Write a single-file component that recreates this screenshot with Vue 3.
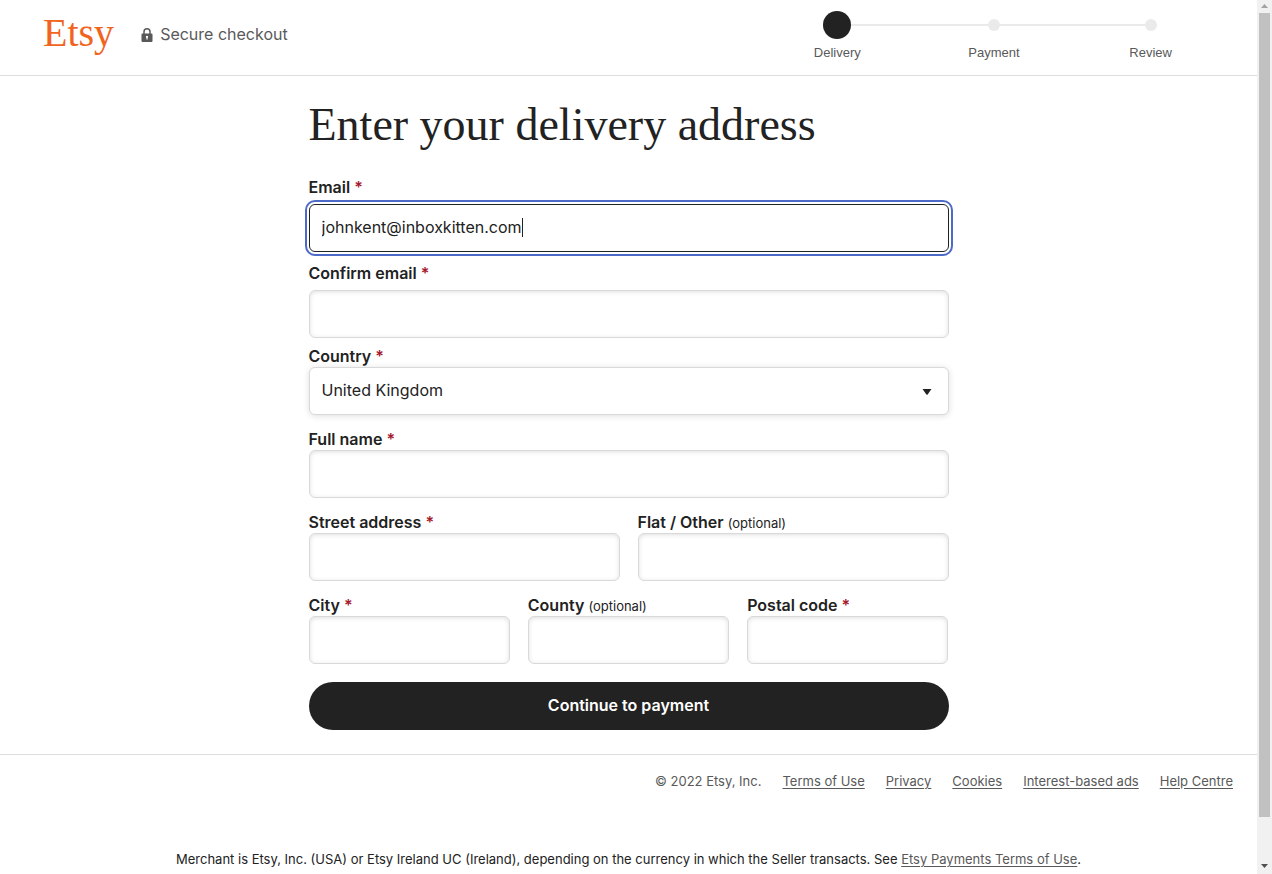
<template>
  <div class="page">
    <header class="site-header">
      <div class="brand">
        <a href="#" class="logo">Etsy</a>
        <div class="secure">
          <svg class="lock" viewBox="0 0 12 14" width="12" height="14" aria-hidden="true">
            <path d="M3 6V3.8a3 3 0 0 1 6 0V6" fill="none" stroke="#595959" stroke-width="1.5" />
            <path
              fill="#595959"
              fill-rule="evenodd"
              d="M1.5 5.5h9a1 1 0 0 1 1 1V13a1 1 0 0 1-1 1h-9a1 1 0 0 1-1-1V6.500a1 1 0 0 1 1-1zM6 7.700a1.200 1.200 0 0 0-.6 2.200v1.600h1.200V9.900A1.200 1.200 0 0 0 6 7.700z"
            />
          </svg>
          <span>Secure checkout</span>
        </div>
      </div>
      <ol class="steps">
        <li v-for="(step, index) in steps" :key="step" :class="{ active: index === currentStep }">
          <span class="track"><span class="dot"></span></span>
          <span class="step-name">{{ step }}</span>
        </li>
      </ol>
    </header>

    <main class="content">
      <h1>Enter your delivery address</h1>
      <form @submit.prevent>
        <div class="field field-email">
          <label for="email">Email <span class="required">*</span></label>
          <div class="input-wrap">
            <input id="email" ref="emailInput" v-model="form.email" type="text" class="focused" />
            <span class="caret" :style="{ left: caretLeft + 'px' }"></span>
          </div>
        </div>
        <div class="field field-confirm">
          <label for="confirm">Confirm email <span class="required">*</span></label>
          <input id="confirm" v-model="form.confirm" type="text" />
        </div>
        <div class="field">
          <label for="country">Country <span class="required">*</span></label>
          <div class="input-wrap">
            <select id="country" v-model="form.country">
              <option>United Kingdom</option>
            </select>
            <svg class="arrow" viewBox="0 0 10 6" width="10" height="6" aria-hidden="true">
              <path d="M.5 0h9L5.600 5.500q-.6.600-1.200 0z" fill="#222" />
            </svg>
          </div>
        </div>
        <div v-for="(row, index) in rows" :key="index" class="row">
          <div v-for="field in row" :key="field.id" class="field">
            <label :for="field.id">
              {{ field.label }}
              <span v-if="field.optional" class="optional">(optional)</span>
              <span v-else class="required">*</span>
            </label>
            <input :id="field.id" v-model="form[field.id]" type="text" />
          </div>
        </div>
        <button type="submit" class="submit">Continue to payment</button>
      </form>
    </main>

    <footer class="site-footer">
      <div class="footer-links">
        <span class="copyright">© 2022 Etsy, Inc.</span>
        <a v-for="link in links" :key="link" href="#">{{ link }}</a>
      </div>
      <p class="merchant">
        Merchant is Etsy, Inc. (USA) or Etsy Ireland UC (Ireland), depending on the currency in which the Seller transacts. See <a href="#">Etsy Payments Terms of Use</a>.
      </p>
    </footer>

    <div class="scrollbar" aria-hidden="true">
      <svg viewBox="0 0 15 13" width="15" height="13"><path d="M4 8h7L7.500 4z" fill="#a3a3a3" /></svg>
      <div class="scroll-track"><div class="thumb"></div></div>
      <svg viewBox="0 0 15 15" width="15" height="15"><path d="M4 5h7L7.500 9z" fill="#505050" /></svg>
    </div>
  </div>
</template>

<script setup>
import { onMounted, reactive, ref } from 'vue';

const steps = ['Delivery', 'Payment', 'Review'];
const currentStep = 0;

const rows = [
  [{ id: 'name', label: 'Full name' }],
  [
    { id: 'street', label: 'Street address' },
    { id: 'flat', label: 'Flat / Other', optional: true },
  ],
  [
    { id: 'city', label: 'City' },
    { id: 'county', label: 'County', optional: true },
    { id: 'postcode', label: 'Postal code' },
  ],
];

const links = ['Terms of Use', 'Privacy', 'Cookies', 'Interest-based ads', 'Help Centre'];

const form = reactive({
  email: 'johnkent@inboxkitten.com',
  confirm: '',
  country: 'United Kingdom',
  name: '',
  street: '',
  flat: '',
  city: '',
  county: '',
  postcode: '',
});

const emailInput = ref(null);
const caretLeft = ref(0);

// put the caret right after the typed text
onMounted(() => {
  const style = getComputedStyle(emailInput.value);
  const ctx = document.createElement('canvas').getContext('2d');
  ctx.font = `${style.fontSize} ${style.fontFamily}`;
  caretLeft.value = Math.round(13 + ctx.measureText(form.email).width);
});
</script>

<style>
body {
  margin: 0;
  background: #fff;
}
</style>

<style scoped>
.page {
  box-sizing: border-box;
  height: 100vh;
  overflow: hidden;
  padding-right: 15px;
  color: #222;
  font-family: Inter, "Liberation Sans", sans-serif;
  font-size: 16px;
}
.site-header {
  display: flex;
  justify-content: space-between;
  height: 75px;
  padding: 0 28px 0 43px;
  border-bottom: 1px solid #ddd;
}
.brand {
  display: flex;
  align-items: center;
  gap: 27px;
  height: 68px;
}
.logo {
  padding-bottom: 2px;
  color: #f1641e;
  font-family: "Liberation Serif", serif;
  font-size: 40px;
  line-height: 48px;
  text-decoration: none;
}
.secure {
  display: flex;
  align-items: center;
  gap: 7px;
  color: #595959;
}
.lock {
  margin-top: 2px;
}
.steps {
  display: grid;
  grid-template-columns: repeat(3, 1fr);
  width: 470px;
  margin: 0;
  padding: 11px 0 0;
  list-style: none;
}
.steps li {
  color: #595959;
  font-family: "Liberation Sans", Arial, sans-serif;
  font-size: 13px;
  line-height: 16px;
  text-align: center;
}
.track {
  display: flex;
  align-items: center;
  height: 28px;
  margin-bottom: 6px;
}
.track::before,
.track::after {
  content: "";
  flex: 1;
  height: 2px;
  background: #eaeaea;
}
.steps li:first-child .track::before,
.steps li:last-child .track::after {
  background: none;
}
.dot {
  width: 12px;
  height: 12px;
  border-radius: 50%;
  background: #eaeaea;
}
.active .dot {
  width: 28px;
  height: 28px;
  background: #222;
}
.step-name {
  display: block;
}
.content {
  max-width: 640px;
  margin: 0 auto;
  padding: 21px 0 24px;
}
h1 {
  margin: 0 0 23px;
  font-family: "Liberation Serif", serif;
  font-size: 46px;
  font-weight: 400;
  line-height: 56px;
}
.field {
  flex: 1;
  min-width: 0;
  margin-bottom: 13px;
}
.field-email {
  margin-bottom: 10px;
}
.field-confirm {
  margin-bottom: 7px;
}
.field-email label,
.field-confirm label {
  margin-bottom: 6px;
}
.row {
  display: flex;
  gap: 18px;
}
label {
  display: block;
  font-weight: 600;
  line-height: 22px;
  white-space: nowrap;
}
.required {
  color: #a61a2e;
}
.optional {
  font-size: 13px;
  font-weight: 400;
  line-height: 16px;
}
.input-wrap {
  position: relative;
}
input,
select {
  display: block;
  box-sizing: border-box;
  width: 100%;
  height: 48px;
  margin: 0;
  padding: 0 12px 2px;
  border: 1px solid #d9d9d9;
  border-radius: 6px;
  outline: none;
  background: #fff;
  color: #222;
  font-family: inherit;
  font-size: 16px;
  appearance: none;
}
input {
  box-shadow: inset 0 1px 4px rgba(34, 34, 34, 0.15);
}
input.focused {
  border-color: #222;
  outline: 2px solid #4d6bc6;
  outline-offset: 2px;
  box-shadow: none;
  caret-color: transparent;
}
select {
  box-shadow: 0 1px 6px rgba(34, 34, 34, 0.15);
}
.caret {
  position: absolute;
  top: 14px;
  width: 1px;
  height: 19px;
  background: #222;
}
.arrow {
  position: absolute;
  top: 22px;
  right: 17px;
  pointer-events: none;
}
.submit {
  display: block;
  width: 100%;
  height: 48px;
  margin-top: 18px;
  padding: 0 0 2px;
  border: none;
  border-radius: 24px;
  background: #222;
  color: #fff;
  font-family: inherit;
  font-size: 16px;
  font-weight: 600;
  cursor: pointer;
}
.row:last-of-type .field {
  margin-bottom: 0;
}
.site-footer {
  padding: 17px 24px 0;
  border-top: 1px solid #ddd;
  font-size: 13px;
  line-height: 18px;
}
.site-footer a {
  color: #595959;
  text-underline-offset: 2px;
}
.footer-links {
  display: flex;
  justify-content: flex-end;
  gap: 21px;
  color: #595959;
}
.merchant {
  margin: 60px 0 0;
  text-align: center;
}
.scrollbar {
  position: fixed;
  top: 0;
  right: 0;
  bottom: 0;
  display: flex;
  flex-direction: column;
  width: 15px;
  background: #f1f1f1;
}
.scroll-track {
  flex: 1;
  padding: 0 2px;
}
.thumb {
  height: 95%;
  background: #c1c1c1;
}
</style>
